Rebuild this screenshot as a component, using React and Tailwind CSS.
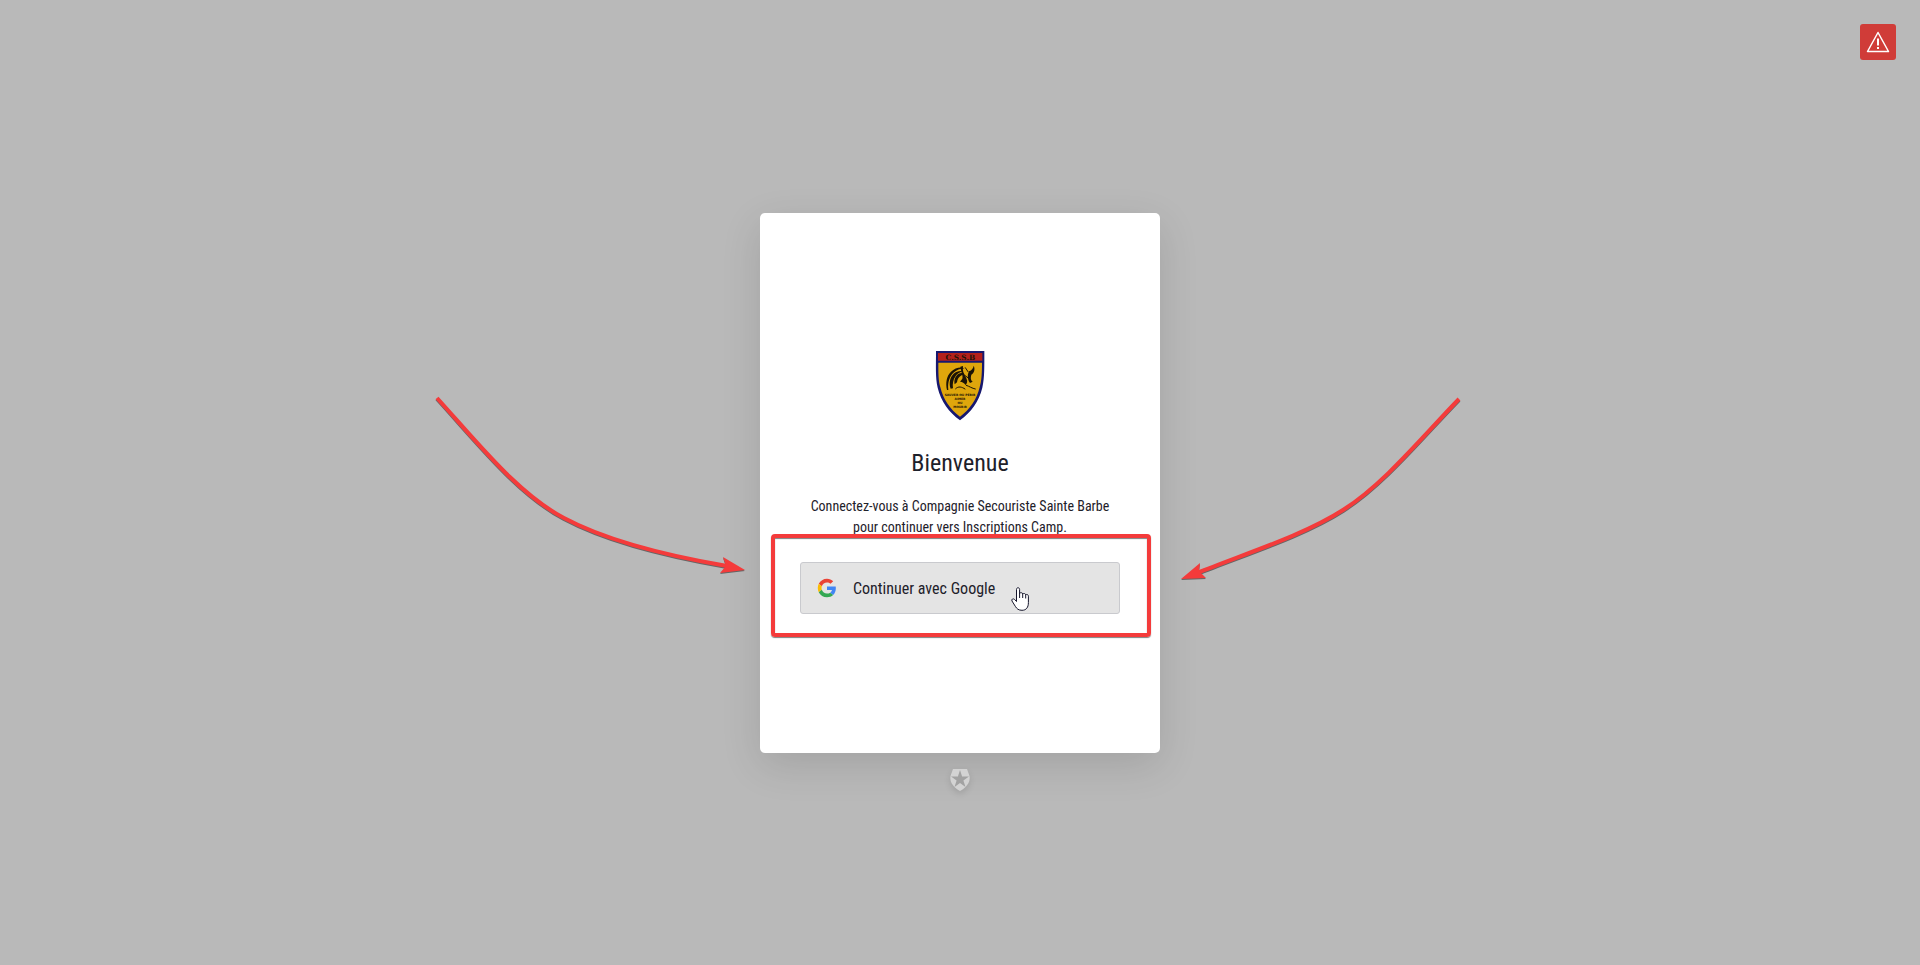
function CompanyLogo() {
  return (
    <svg
      viewBox="0 0 150 210"
      className="h-[70px] w-[50px]"
      role="img"
      aria-label="Compagnie Secouriste Sainte Barbe"
    >
      <path
        d="M3 0H148C148 44 149 80 142 110C132 151 108 184 75 208C42 184 18 151 8 110C1 80 3 44 3 0Z"
        fill="#17186f"
      />
      <path d="M9 6H142V29H9Z" fill="#b3201c" />
      <path
        d="M10 35H141C141 66 140 89 134 109C125 146 105 175 75 197C45 175 25 146 16 109C10 89 10 66 10 35Z"
        fill="#dfa60c"
      />
      <g fill="#1b1306">
        <path d="M36 117C31 96 35 74 48 62C60 51 78 46 90 53C78 52 66 56 57 64C44 76 37 94 40 117Z" />
        <path d="M47 113C41 97 45 78 56 68C65 60 76 58 84 61C75 64 67 68 62 75C54 86 52 99 54 112Z" />
        <path d="M59 100C56 88 61 75 70 69C76 65 83 65 88 68L80 73C72 77 67 85 66 94Z" />
        <path d="M76 47L84 45C82 58 86 69 92 78C97 87 99 94 92 102C88 96 82 92 75 92L81 85C86 78 79 66 76 47Z" />
        <path d="M102 61C110 58 116 50 116 44C121 54 118 65 109 71C106 80 107 88 113 92L105 96C98 88 96 72 102 61Z" />
      </g>
      <g fill="none" stroke="#1b1306" strokeLinecap="round" strokeWidth="3">
        <path d="M62 113C70 105 80 107 90 114" />
        <path d="M94 103C103 106 111 112 121 114" />
        <path d="M91 50L99 62M88 72L101 82" />
      </g>
      <g
        fill="#1b1306"
        textAnchor="middle"
        fontFamily="'DejaVu Sans', sans-serif"
        fontWeight="700"
      >
        <text x="76" y="26" fontSize="22" fontFamily="'DejaVu Serif', serif">
          C.S.S.B
        </text>
        <text x="75" y="135" fontSize="9">SAUVER OU PÉRIR</text>
        <text x="75" y="147" fontSize="9">AIMER</text>
        <text x="75" y="159" fontSize="9">OU</text>
        <text x="75" y="171" fontSize="9">MOURIR</text>
      </g>
    </svg>
  );
}

function GoogleIcon() {
  return (
    <svg viewBox="-2 -2 52 52" className="size-5 shrink-0" aria-hidden="true">
      <path fill="#EA4335" d="M24 9.5c3.54 0 6.71 1.22 9.21 3.6l6.85-6.85C35.9 2.38 30.47 0 24 0 14.62 0 6.51 5.38 2.56 13.22l7.98 6.19C12.43 13.72 17.74 9.5 24 9.5z" />
      <path fill="#4285F4" d="M46.98 24.55c0-1.57-.15-3.09-.38-4.55H24v9.02h12.94c-.58 2.96-2.26 5.48-4.78 7.18l7.73 6c4.51-4.18 7.09-10.36 7.09-17.65z" />
      <path fill="#FBBC05" d="M10.53 28.59c-.48-1.45-.76-2.99-.76-4.59s.27-3.14.76-4.59l-7.98-6.19C.92 16.46 0 20.12 0 24c0 3.88.92 7.54 2.56 10.78l7.97-6.19z" />
      <path fill="#34A853" d="M24 48c6.48 0 11.93-2.13 15.89-5.81l-7.73-6c-2.15 1.45-4.92 2.3-8.16 2.3-6.26 0-11.57-4.22-13.47-9.91l-7.98 6.19C6.51 42.62 14.62 48 24 48z" />
    </svg>
  );
}

function HandCursor() {
  return (
    <svg
      viewBox="0 0 18 24"
      className="pointer-events-none absolute left-[211px] top-[25px] h-6 w-[18px]"
      aria-hidden="true"
    >
      <path
        d="M5.500 14.500V2.400C5.500 .2 8.600 .2 8.600 2.400V6.400C9.500 5.200 11.500 5.500 11.700 7C12.700 6 14.500 6.500 14.700 7.800C15.900 7 17.400 7.700 17.400 9.200V15.500C17.400 20.500 15.200 23.300 11 23.300C7.500 23.300 5.800 21.800 4.300 19.300L1 14C0 12.300 2.200 11.200 3.500 12.400Z"
        fill="#fff"
        stroke="#15152b"
        strokeLinejoin="round"
      />
      <path d="M8.600 6V11M11.700 7V11M14.700 8V11.500" stroke="#15152b" fill="none" />
    </svg>
  );
}

function Arrows() {
  return (
    <svg
      viewBox="0 0 400 540"
      className="pointer-events-none absolute left-0 top-0 h-[540px] w-[400px] overflow-visible drop-shadow-[0_1px_0_rgba(0,0,0,0.45)]"
      aria-hidden="true"
    >
      <g fill="none" stroke="#f43b3b" strokeWidth="4">
        <path d="M-323 185C-282 230 -242 281 -196 305C-153 328 -97 342 -33 353" />
        <path d="M699 186C663 223 624 271 583 297C544 322 487 340 437 360" />
      </g>
      <path d="M-15 357L-37 344L-34 353L-40 360Z" fill="#f43b3b" />
      <path d="M421 366L440 350L439 358L446 365Z" fill="#f43b3b" />
    </svg>
  );
}

function BadgeIcon() {
  return (
    <svg viewBox="0 0 20 24" className="h-6 w-5 drop-shadow-md" aria-hidden="true">
      <path d="M3 1H17L19.500 8C20.500 14 17 19 10 23C3 19 -.5 14 .5 8Z" fill="#d3d3d3" />
      <path
        d="M10 2L12.100 8.500H19L13.400 12.400L15.500 19L10 15L4.500 19L6.600 12.400L1 8.500H7.900Z"
        fill="#a2a2a2"
      />
    </svg>
  );
}

export default function App() {
  return (
    <div className="relative flex min-h-screen items-center justify-center bg-[#b9b9b9] font-['Roboto_Condensed',Roboto,sans-serif] text-[#1e212a]">
      <button
        type="button"
        aria-label="Avertissement"
        className="absolute right-6 top-6 flex size-9 items-center justify-center rounded-[3px] bg-[#d03c38] text-white"
      >
        <svg viewBox="0 0 24 24" className="size-6" fill="none" stroke="currentColor" aria-hidden="true">
          <path d="M12 2.500L22.500 21.500H1.500Z" strokeWidth="1.500" strokeLinejoin="round" />
          <path d="M12 8.500V15.500M12 17V19" strokeWidth="2" />
        </svg>
      </button>

      <main className="relative w-full max-w-[400px]">
        <section className="flex min-h-[540px] flex-col items-center justify-center rounded-[5px] bg-white px-10 text-center shadow-[0_12px_40px_rgba(0,0,0,0.12)]">
          <CompanyLogo />
          <h1 className="mt-6 pt-0.5 text-2xl leading-[33px] font-normal">Bienvenue</h1>
          <p className="mt-4 text-sm leading-[21px]">
            Connectez-vous à Compagnie Secouriste Sainte Barbe
            <br />
            pour continuer vers Inscriptions Camp.
          </p>
          <div className="relative mt-6 w-full">
            <button
              type="button"
              className="flex h-[52px] w-full cursor-pointer items-center gap-4 rounded-[3px] border border-[#c9cace] bg-[#e4e4e4] px-4 text-left text-base"
            >
              <GoogleIcon />
              <span className="pt-0.5">Continuer avec Google</span>
            </button>
            <div className="pointer-events-none absolute -left-[29px] -right-[31px] -top-7 -bottom-[23px] rounded-[4px] border-4 border-[#f43b3b] shadow-[0_1px_1px_rgba(0,0,0,0.5),inset_0_1px_1px_rgba(0,0,0,0.5)]" />
            <HandCursor />
          </div>
        </section>
        <a href="#auth0" aria-label="Auth0" className="absolute left-1/2 top-full mt-[15px] -translate-x-1/2">
          <BadgeIcon />
        </a>
        <Arrows />
      </main>
    </div>
  );
}
